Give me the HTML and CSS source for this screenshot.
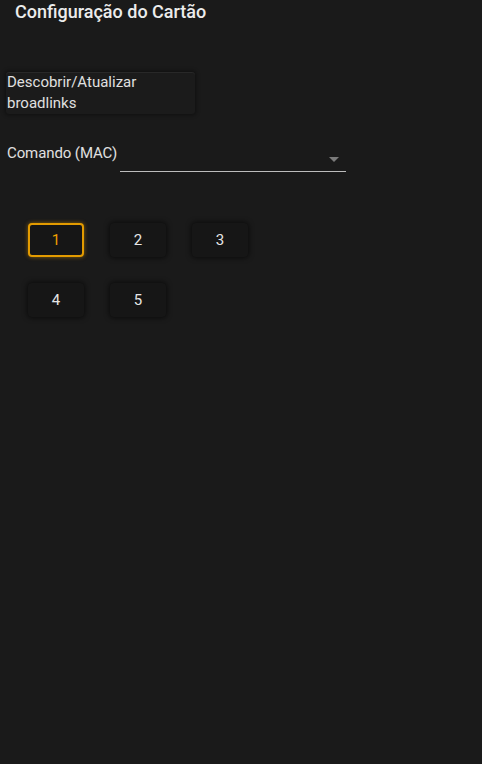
FILE: index.html
```html
<!DOCTYPE html>
<html lang="pt">
<head>
<meta charset="utf-8">
<link rel="stylesheet" href="styles.css">
</head>
<body>
<div class="page">
  <h1 class="title">Configuração do Cartão</h1>
  <button class="discover">Descobrir/Atualizar broadlinks</button>
  <div class="field">
    <span class="label">Comando (MAC)</span>
    <div class="select">
      <span class="arrow"></span>
    </div>
  </div>
  <div class="grid">
    <button class="num active">1</button>
    <button class="num">2</button>
    <button class="num">3</button>
    <button class="num">4</button>
    <button class="num">5</button>
  </div>
</div>
</body>
</html>
```
FILE: styles.css
```css
html, body {
  margin: 0;
  padding: 0;
  background: #1a1a1a;
  height: 100%;
}
.page {
  font-family: Roboto, "Noto Sans", sans-serif;
  color: #e6e6e6;
  display: flex;
  flex-direction: column;
  align-items: flex-start;
}
.title {
  margin: 0;
  padding: 0 0 0 15px;
  font-size: 18px;
  font-weight: 500;
  line-height: 24px;
  color: #ececec;
}
.discover {
  margin: 48px 0 0 6px;
  width: 189px;
  height: 42px;
  padding: 0 0 0 1px;
  border: none;
  border-radius: 3px;
  background: #1b1b1b;
  box-shadow: 0 0 4px 1px rgba(0,0,0,0.45), inset 0 1px 0 rgba(255,255,255,0.06);
  font-family: inherit;
  font-size: 15px;
  line-height: 21px;
  color: #e0e0e0;
  text-align: left;
}
.field {
  margin: 24px 0 0 7px;
  display: flex;
  align-items: flex-start;
}
.label {
  font-size: 15px;
  line-height: 20px;
  color: #e0e0e0;
  margin-top: 5px;
  letter-spacing: -0.1px;
}
.select {
  margin-left: 3px;
  width: 226px;
  height: 33px;
  border-bottom: 1px solid #bdbdbd;
  position: relative;
}
.arrow {
  position: absolute;
  right: 7px;
  top: 19px;
  width: 0;
  height: 0;
  border-left: 5px solid transparent;
  border-right: 5px solid transparent;
  border-top: 5px solid #7a7a7a;
}
.grid {
  margin: 51px 0 0 28px;
  display: grid;
  grid-template-columns: repeat(3, 56px);
  column-gap: 26px;
  row-gap: 26px;
}
.num {
  width: 56px;
  height: 34px;
  padding: 0;
  border: 1px solid transparent;
  border-radius: 4px;
  background: #161616;
  box-shadow: 0 0 5px 1px rgba(0,0,0,0.6);
  font-family: inherit;
  font-size: 15px;
  color: #e6e6e6;
}
.num.active {
  border: 2px solid #e39b00;
  color: #f0a000;
  box-shadow: 0 0 4px rgba(227,155,0,0.55);
}
```
